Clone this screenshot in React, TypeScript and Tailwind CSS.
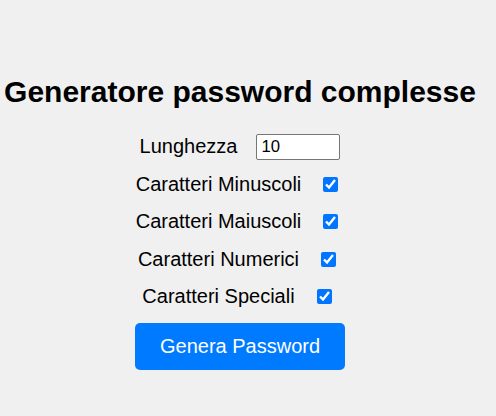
import React from "react";

function CheckRow({ label }: { label: string }) {
  return (
    <div className="flex h-[26px] items-center justify-center">
      <span className="mr-[19px] text-[20px] leading-[23px] text-black">{label}</span>
      <input
        type="checkbox"
        defaultChecked
        className="ml-[3px] mr-[6px] h-[15px] w-[15px] accent-[#0075ff]"
      />
    </div>
  );
}

export default function App() {
  return (
    <div
      className="min-h-[416px] w-full bg-[#f0f0f0]"
      style={{ fontFamily: '"Liberation Sans", Arial, sans-serif' }}
    >
      <div className="flex w-[480px] flex-col items-center pt-[75px]">
        <h1 className="text-[30px] font-bold leading-[34.5px] text-black">
          Generatore password complesse
        </h1>
        <div className="mt-[24px] flex flex-col gap-[11.5px]">
          <div className="flex h-[26px] items-center justify-center">
            <span className="mr-[19px] text-[20px] leading-[23px] text-black">Lunghezza</span>
            <input
              type="text"
              defaultValue="10"
              className="h-[26px] w-[84px] rounded-[2px] border border-[#767676] bg-white px-[4px] text-[16.7px] text-black outline-none"
            />
          </div>
          <CheckRow label="Caratteri Minuscoli" />
          <CheckRow label="Caratteri Maiuscoli" />
          <CheckRow label="Caratteri Numerici" />
          <CheckRow label="Caratteri Speciali" />
        </div>
        <button className="mt-[13px] h-[47px] w-[210px] rounded-[5px] bg-[#007bff] text-[20px] text-white">
          Genera Password
        </button>
      </div>
    </div>
  );
}
